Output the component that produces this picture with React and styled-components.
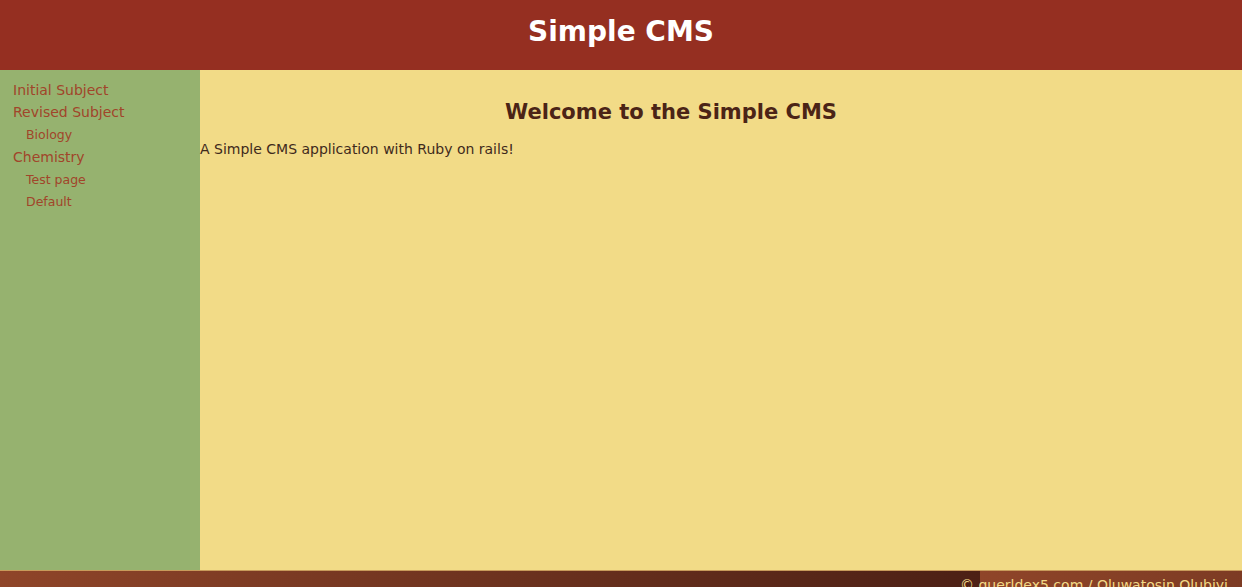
import React from "react";
import styled, { createGlobalStyle } from "styled-components";

const Global = createGlobalStyle`
  html, body { margin: 0; padding: 0; }
  body {
    font-family: "DejaVu Sans", Verdana, sans-serif;
    background: #f2db87;
  }
`;

const Page = styled.div`
  display: flex;
  flex-direction: column;
  min-height: 100vh;
`;

const Header = styled.header`
  height: 70px;
  box-sizing: border-box;
  background: #952f21;
  display: flex;
  justify-content: center;
  align-items: flex-start;
  padding-top: 15px;
`;

const Title = styled.h1`
  margin: 0;
  color: #ffffff;
  font-size: 28px;
  font-weight: bold;
  line-height: 33px;
`;

const Body = styled.div`
  display: flex;
  height: 500px;
`;

const Sidebar = styled.nav`
  width: 200px;
  flex: none;
  background: #96b26f;
  box-sizing: border-box;
  padding-top: 8.6px;
`;

const NavList = styled.ul`
  list-style: none;
  margin: 0;
  padding: 0;
`;

const NavItem = styled.li`
  margin: 0;
  padding: 0;
`;

const NavLink = styled.a`
  display: block;
  color: #a1452a;
  text-decoration: none;
  line-height: 22.5px;
  font-size: ${(p) => (p.$sub ? "12.5px" : "14px")};
  padding-left: ${(p) => (p.$sub ? "26px" : "13px")};
`;

const Main = styled.main`
  flex: 1;
  background: #f2db87;
`;

const Heading = styled.h2`
  margin: 30px 100px 17px 0;
  text-align: center;
  font-size: 21px;
  font-weight: bold;
  color: #4b2416;
`;

const Text = styled.p`
  margin: 0;
  font-size: 14px;
  color: #3f2a1c;
`;

const Footer = styled.footer`
  border-top: 1px solid #c89b5b;
  height: 40px;
  background: linear-gradient(to right, #8f4529 0%, #4c2015 100%);
  background-size: 980px 100%;
  background-repeat: repeat-x;
  text-align: right;
  padding: 4px 14px 0 0;
  box-sizing: border-box;
`;

const FooterText = styled.span`
  color: #f2d987;
  font-size: 14px;
`;

const nav = [
  { label: "Initial Subject" },
  { label: "Revised Subject", children: ["Biology"] },
  { label: "Chemistry", children: ["Test page", "Default"] },
];

export default function App() {
  return (
    <Page>
      <Global />
      <Header>
        <Title>Simple CMS</Title>
      </Header>
      <Body>
        <Sidebar>
          <NavList>
            {nav.map((s) => (
              <NavItem key={s.label}>
                <NavLink href="#">{s.label}</NavLink>
                {s.children && (
                  <NavList>
                    {s.children.map((c) => (
                      <NavItem key={c}>
                        <NavLink href="#" $sub>
                          {c}
                        </NavLink>
                      </NavItem>
                    ))}
                  </NavList>
                )}
              </NavItem>
            ))}
          </NavList>
        </Sidebar>
        <Main>
          <Heading>Welcome to the Simple CMS</Heading>
          <Text>A Simple CMS application with Ruby on rails!</Text>
        </Main>
      </Body>
      <Footer>
        <FooterText>© guerldex5.com / Oluwatosin Olubiyi</FooterText>
      </Footer>
    </Page>
  );
}
